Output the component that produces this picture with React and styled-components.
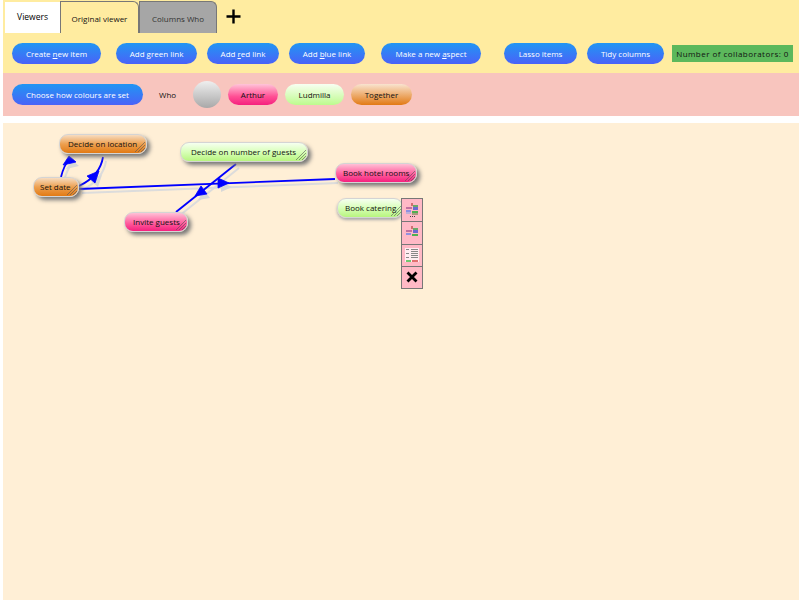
import styled, { createGlobalStyle } from "styled-components";

const GlobalStyle = createGlobalStyle`
  html, body {
    margin: 0;
    padding: 0;
    background: #ffffff;
  }
  body {
    font-family: "Open Sans", "Liberation Sans", sans-serif;
  }
`;

const Page = styled.div`
  width: 799px;
  height: 600px;
  overflow: hidden;
  padding-left: 3px;
  box-sizing: border-box;
  display: flex;
  flex-direction: column;
`;

const TopPanel = styled.div`
  background: #ffeca0;
  height: 73px;
  flex-shrink: 0;
`;

const TabRow = styled.div`
  display: flex;
  align-items: flex-start;
  padding: 1px 0 0 2px;
  height: 32px;
`;

const ViewersLabel = styled.div`
  width: 55px;
  height: 31px;
  margin-top: 1px;
  background: #fff;
  font-size: 8.5px;
  line-height: 29px;
  text-align: center;
  color: #000;
`;

const Tab = styled.div`
  width: ${(props) => props.$w}px;
  height: 32px;
  box-sizing: border-box;
  border: 1px solid #777;
  border-bottom: none;
  border-radius: 0 6px 0 0;
  background: ${(props) => (props.$active ? "#ffeca0" : "#a6a6a6")};
  color: ${(props) => (props.$active ? "#111" : "#333")};
  font-size: 8px;
  line-height: 33px;
  text-align: center;
`;

const AddTab = styled.button`
  border: none;
  background: none;
  padding: 0;
  margin: 7px 0 0 8px;
  width: 17px;
  height: 17px;
  display: flex;
`;

const ButtonRow = styled.div`
  display: flex;
  align-items: center;
  padding: 10px 0 0 9px;
`;

const Action = styled.button`
  width: ${(props) => props.$w}px;
  height: 21px;
  padding: 0;
  margin-left: ${(props) => props.$before || 0}px;
  border: none;
  border-radius: 11px;
  background: linear-gradient(#2196f3, #4a62f8);
  color: #fff;
  font-family: inherit;
  font-size: 8px;
  white-space: nowrap;
  u {
    text-decoration: underline;
  }
`;

const Collaborators = styled.div`
  margin-left: 8px;
  width: 121px;
  height: 17px;
  background: #5cb85c;
  color: #111;
  font-size: 8px;
  letter-spacing: 0.46px;
  line-height: 17px;
  text-align: center;
  white-space: nowrap;
`;

const ColourPanel = styled.div`
  background: #f8c5be;
  height: 43px;
  flex-shrink: 0;
  display: flex;
  align-items: center;
  padding-left: 9px;
`;

const WhoLabel = styled.div`
  width: 19px;
  margin: 0 15px 0 16px;
  font-size: 8px;
  color: #111;
`;

const Swatch = styled.div`
  width: ${(props) => props.$w}px;
  height: 21px;
  margin-right: 7px;
  border-radius: 11px;
  font-size: 8px;
  line-height: 21px;
  text-align: center;
  color: #111;
  background: ${(props) => props.$fill};
`;

const Circle = styled.div`
  width: 28px;
  height: 27px;
  margin-right: 7px;
  border-radius: 50%;
  background: linear-gradient(#efefef, #a8a8a8);
`;

const Canvas = styled.div`
  position: relative;
  margin-top: 7px;
  flex: 1;
  background: #ffefd6;
`;

const Links = styled.svg`
  position: absolute;
  left: -3px;
  top: -123px;
  width: 799px;
  height: 600px;
`;

const Node = styled.div`
  position: absolute;
  left: ${(props) => props.$x - 3}px;
  top: ${(props) => props.$y - 123}px;
  width: ${(props) => props.$w}px;
  height: 20px;
  box-sizing: border-box;
  border: 1px solid #d4d4d4;
  border-radius: 9px;
  background: ${(props) => props.$fill};
  box-shadow: ${(props) => (props.$flat ? "0 2px 3px #aaa" : "3px 3px 4px #777")};
  color: #111;
  font-size: 8px;
  line-height: 17px;
  padding-left: ${(props) => props.$pad}px;
  white-space: nowrap;
`;

const Handle = styled.svg`
  position: absolute;
  right: 0;
  bottom: 0;
  width: 12px;
  height: 12px;
`;

const NodeMenu = styled.div`
  position: absolute;
  left: 398px;
  top: 75px;
  width: 22px;
  box-sizing: border-box;
  border: 1px solid #777;
  background: #ffb9c6;
`;

const MenuCell = styled.div`
  height: 22.25px;
  box-sizing: border-box;
  border-top: ${(props) => (props.$first ? "none" : "1px solid #777")};
  display: flex;
  align-items: center;
  justify-content: center;
`;

const orange = "linear-gradient(#f7dcc0, #eda050 50%, #e27a14)";
const rose = "linear-gradient(#ffc0d6, #ff5f9e 55%, #f5207e)";
const lime = "linear-gradient(#f6fff0, #d8ffb8 50%, #b8f57f)";

const nodes = [
  { label: "Decide on location", x: 59, y: 134, w: 88, pad: 8, fill: orange },
  { label: "Set date", x: 33, y: 177, w: 46, pad: 6, fill: orange },
  { label: "Invite guests", x: 124, y: 212, w: 64, pad: 8, fill: rose },
  { label: "Decide on number of guests", x: 180, y: 142, w: 128, pad: 10, fill: lime },
  { label: "Book hotel rooms", x: 335, y: 163, w: 82, pad: 7, fill: rose },
  { label: "Book catering", x: 337, y: 198, w: 66, pad: 7, fill: lime, flat: true },
];

const linkPaths = [
  "M61 177 Q64 165 70 158",
  "M103 157 Q100 176 79 186",
  "M79 189 L335 179",
  "M236 164 L176 212",
];

const linkHeads = [
  "69,156 63,165 76,162",
  "99,171 87,176 95,183",
  "229,183 218,178 218,188",
  "195,196 201,186 207,194",
];

// little stacked link/colour glyphs for the node menu
const StackIcon = ({ dots }) => (
  <svg width="14" height="14" viewBox="0 0 14 14">
    <rect x="6" y="0" width="2" height="3" fill="#d07070" />
    <rect x="8" y="2" width="5" height="2" fill="#6aa86a" />
    <rect x="1" y="4" width="6" height="2" fill="#c070a0" />
    <rect x="8" y="4" width="5" height="3" fill="#6a6ad0" />
    <rect x="1" y="7" width="5" height="2" fill="#9090e0" />
    <rect x="7" y="8" width="6" height="2" fill="#50b050" />
    {dots && <rect x="1" y="9" width="5" height="2" fill="#c0b0d8" />}
    {dots && <rect x="7" y="10" width="6" height="2" fill="#a89a80" />}
    {dots && <path d="M5 14h1v-1H5zM7 14h1v-1H7zM9 14h1v-1H9z" fill="#444" />}
  </svg>
);

const ListIcon = () => (
  <svg width="14" height="14" viewBox="0 0 14 14">
    <rect width="14" height="14" fill="#fff" opacity="0.75" />
    <path d="M1 1.5h3M6 1.5h7M6 3.5h7M1 5.5h3M6 5.5h7M6 7.5h7M1 9.5h3M6 9.5h7" stroke="#888" strokeWidth="1" />
    <rect x="1" y="12" width="5" height="2" fill="#70c870" />
    <rect x="7" y="12" width="6" height="2" fill="#e07070" />
  </svg>
);

const CloseIcon = () => (
  <svg width="12" height="12" viewBox="0 0 12 12">
    <path d="M1.5 1.5l9 9M10.5 1.5l-9 9" stroke="#000" strokeWidth="2.8" />
  </svg>
);

export default function App() {
  return (
    <>
      <GlobalStyle />
      <Page>
        <TopPanel>
          <TabRow>
            <ViewersLabel>Viewers</ViewersLabel>
            <Tab $active $w={79}>Original viewer</Tab>
            <Tab $w={78}>Columns Who</Tab>
            <AddTab>
              <svg width="17" height="17" viewBox="0 0 17 17">
                <path d="M8.5 1.5v14M1.5 8.5h14" stroke="#000" strokeWidth="2.4" />
              </svg>
            </AddTab>
          </TabRow>
          <ButtonRow>
            <Action $w={89}>Create <u>n</u>ew item</Action>
            <Action $w={81} $before={15}>Add green link</Action>
            <Action $w={72} $before={10}>Add <u>r</u>ed link</Action>
            <Action $w={76} $before={10}>Add <u>b</u>lue link</Action>
            <Action $w={100} $before={16}>Make a new <u>a</u>spect</Action>
            <Action $w={73} $before={23}>Lasso items</Action>
            <Action $w={77} $before={10}>Tidy columns</Action>
            <Collaborators>Number of collaborators: 0</Collaborators>
          </ButtonRow>
        </TopPanel>
        <ColourPanel>
          <Action $w={131}>Choose how colours are set</Action>
          <WhoLabel>Who</WhoLabel>
          <Circle />
          <Swatch $w={50} $fill="linear-gradient(#ffc4d8, #ff4f94 60%, #f5207e)">Arthur</Swatch>
          <Swatch $w={59} $fill="linear-gradient(#f8fff2, #bdfb8e)">Ludmilla</Swatch>
          <Swatch $w={61} $fill="linear-gradient(#f9e3cf, #e27a14)">Together</Swatch>
        </ColourPanel>
        <Canvas>
          <Links viewBox="0 0 799 600">
            <g transform="translate(3 4)">
              {linkPaths.map((d) => (
                <path key={d} d={d} fill="none" stroke="#dcdcdc" strokeWidth="2" />
              ))}
              {linkHeads.map((p) => (
                <polygon key={p} points={p} fill="#d8d8d8" />
              ))}
            </g>
            {linkPaths.map((d) => (
              <path key={d} d={d} fill="none" stroke="#0000ff" strokeWidth="1.8" />
            ))}
            {linkHeads.map((p) => (
              <polygon key={p} points={p} fill="#0000ff" stroke="#0000ff" strokeWidth="0.8" />
            ))}
          </Links>
          {nodes.map((node) => (
            <Node key={node.label} $x={node.x} $y={node.y} $w={node.w} $pad={node.pad} $fill={node.fill} $flat={node.flat}>
              {node.label}
              <Handle viewBox="0 0 12 12">
                <path d="M1 11L11 1M4 11l7-7M7 11l4-4" stroke="#555" strokeWidth="0.6" />
              </Handle>
            </Node>
          ))}
          <NodeMenu>
            <MenuCell $first><StackIcon dots /></MenuCell>
            <MenuCell><StackIcon /></MenuCell>
            <MenuCell><ListIcon /></MenuCell>
            <MenuCell><CloseIcon /></MenuCell>
          </NodeMenu>
        </Canvas>
      </Page>
    </>
  );
}
